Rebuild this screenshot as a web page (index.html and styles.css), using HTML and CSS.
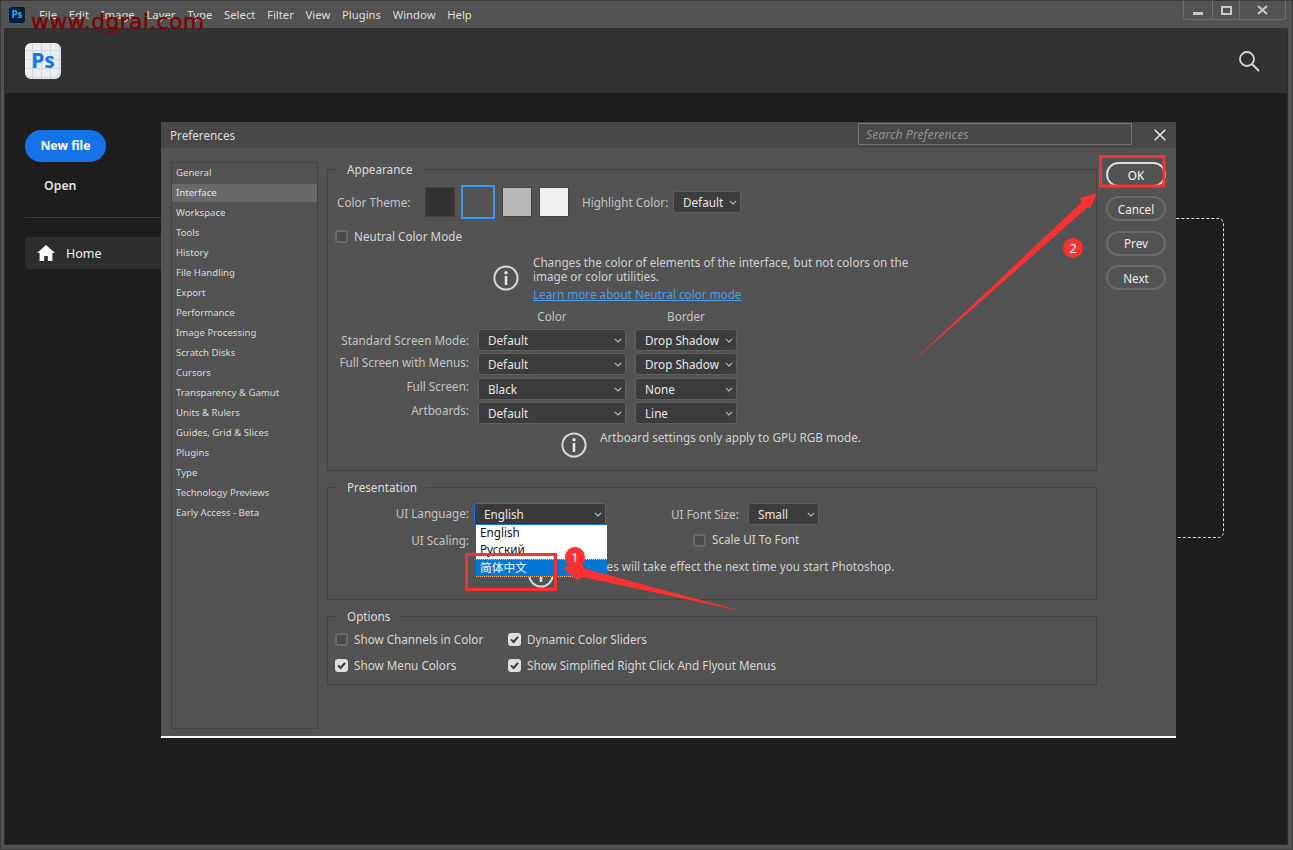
FILE: index.html
```html
<!DOCTYPE html>
<html lang="en">
<head>
<meta charset="utf-8">
<title>Photoshop Preferences</title>
<link rel="stylesheet" href="styles.css">
</head>
<body>
<svg class="defs" width="0" height="0" aria-hidden="true">
  <symbol id="chev" viewBox="0 0 8 5"><path d="M.8.8 4 4 7.2.8" fill="none" stroke="#bdbdbd" stroke-width="1.1"/></symbol>
  <symbol id="info" viewBox="0 0 26 26"><circle cx="13" cy="13" r="11.6" fill="none" stroke="#d6d6d6" stroke-width="2"/><circle cx="13" cy="7.8" r="1.7" fill="#e4e4e4"/><path d="M13 11v9" stroke="#e4e4e4" stroke-width="2.6"/></symbol>
  <symbol id="tick" viewBox="0 0 13 13"><path d="M3 6.4 5.6 9 10 3.8" fill="none" stroke="#3a3a3a" stroke-width="2"/></symbol>
</svg>
<div class="app">
  <header class="menubar">
    <div class="app-icon">Ps</div>
    <nav class="menu">
      <span>File</span><span>Edit</span><span>Image</span><span>Layer</span><span>Type</span><span>Select</span><span>Filter</span><span>View</span><span>Plugins</span><span>Window</span><span>Help</span>
    </nav>
    <div class="winctl">
      <div class="winbtn w-min"><svg width="10" height="3"><rect width="10" height="3" fill="#c8c8c8"/></svg></div>
      <div class="winbtn w-max"><svg width="11" height="9"><rect x="1" y="1" width="9" height="7" fill="none" stroke="#c8c8c8" stroke-width="2"/></svg></div>
      <div class="winbtn w-close"><svg width="11" height="10"><path d="M1 1l9 8M10 1l-9 8" stroke="#c8c8c8" stroke-width="2"/></svg></div>
    </div>
  </header>
  <div class="frame">
    <div class="homebar">
      <div class="logo">Ps</div>
      <svg class="search-ic" width="24" height="24" viewBox="0 0 24 24"><circle cx="10" cy="10" r="7" fill="none" stroke="#d4d4d4" stroke-width="1.8"/><path d="M15 15l7 7" stroke="#d4d4d4" stroke-width="2"/></svg>
    </div>
    <div class="home">
      <aside class="side">
        <div class="newfile">New file</div>
        <div class="open">Open</div>
        <div class="sep"></div>
        <div class="homeitem">
          <svg width="18" height="16" viewBox="0 0 18 16"><path d="M9 0 0 8h2.6v8h4.6v-5h3.6v5h4.6V8H18z" fill="#fff"/></svg>
          <span>Home</span>
        </div>
      </aside>
      <main class="drop-wrap"><div class="dropzone"></div></main>
    </div>
  </div>

  <section class="dialog">
    <div class="dlg-title">
      <span class="dlg-name">Preferences</span>
      <div class="dlg-search">Search Preferences</div>
      <svg class="dlg-close" width="12" height="12" viewBox="0 0 12 12"><path d="M.7.7l10.6 10.6M11.3.7.7 11.3" stroke="#e6e6e6" stroke-width="1.6"/></svg>
    </div>
    <div class="dlg-body">
      <ul class="cats">
        <li>General</li><li class="active">Interface</li><li>Workspace</li><li>Tools</li><li>History</li><li>File Handling</li><li>Export</li><li>Performance</li><li>Image Processing</li><li>Scratch Disks</li><li>Cursors</li><li>Transparency &amp; Gamut</li><li>Units &amp; Rulers</li><li>Guides, Grid &amp; Slices</li><li>Plugins</li><li>Type</li><li>Technology Previews</li><li>Early Access - Beta</li>
      </ul>
      <div class="panels">
        <div class="group g-app">
          <div class="legend">Appearance</div>
          <div class="theme-row">
            <span class="lbl theme-lbl">Color Theme:</span>
            <span class="swatch s1"></span>
            <span class="swatch s2"></span>
            <span class="swatch s3"></span>
            <span class="swatch s4"></span>
            <span class="lbl hl-lbl">Highlight Color:</span>
            <div class="dd dd-hl"><span>Default</span><svg class="chev"><use href="#chev"/></svg></div>
          </div>
          <label class="check neutral"><span class="box"></span><span>Neutral Color Mode</span></label>
          <div class="info info-a">
            <svg class="info-ic"><use href="#info"/></svg>
            <div>
              <p>Changes the color of elements of the interface, but not colors on the<br>image or color utilities.</p>
              <a class="link">Learn more about Neutral color mode</a>
            </div>
          </div>
          <div class="modes">
            <span></span><span class="head">Color</span><span class="head">Border</span>
            <span class="lbl m-lbl">Standard Screen Mode:</span>
            <div class="dd"><span>Default</span><svg class="chev"><use href="#chev"/></svg></div>
            <div class="dd"><span>Drop Shadow</span><svg class="chev"><use href="#chev"/></svg></div>
            <span class="lbl m-lbl up1">Full Screen with Menus:</span>
            <div class="dd"><span>Default</span><svg class="chev"><use href="#chev"/></svg></div>
            <div class="dd"><span>Drop Shadow</span><svg class="chev"><use href="#chev"/></svg></div>
            <span class="lbl m-lbl up3">Full Screen:</span>
            <div class="dd"><span>Black</span><svg class="chev"><use href="#chev"/></svg></div>
            <div class="dd"><span>None</span><svg class="chev"><use href="#chev"/></svg></div>
            <span class="lbl m-lbl up3">Artboards:</span>
            <div class="dd"><span>Default</span><svg class="chev"><use href="#chev"/></svg></div>
            <div class="dd"><span>Line</span><svg class="chev"><use href="#chev"/></svg></div>
          </div>
          <div class="info info-b">
            <svg class="info-ic"><use href="#info"/></svg>
            <p>Artboard settings only apply to GPU RGB mode.</p>
          </div>
        </div>

        <div class="group g-pres">
          <div class="legend">Presentation</div>
          <div class="pres-row r1">
            <span class="lbl p-lbl">UI Language:</span>
            <div class="lang">
              <div class="dd dd-open"><span>English</span><svg class="chev"><use href="#chev"/></svg></div>
              <ul class="popup">
                <li>English</li>
                <li>Русский</li>
                <li class="sel">简体中文</li>
              </ul>
            </div>
            <span class="lbl fs-lbl">UI Font Size:</span>
            <div class="dd dd-fs"><span>Small</span><svg class="chev"><use href="#chev"/></svg></div>
          </div>
          <div class="pres-row r2">
            <span class="lbl p-lbl">UI Scaling:</span>
            <label class="check scale"><span class="box"></span><span>Scale UI To Font</span></label>
          </div>
          <div class="info info-c">
            <svg class="info-ic"><use href="#info"/></svg>
            <p>Changes will take effect the next time you start Photoshop.</p>
          </div>
        </div>

        <div class="group g-opt">
          <div class="legend">Options</div>
          <div class="opt-grid">
            <label class="check"><span class="box"></span><span>Show Channels in Color</span></label>
            <label class="check"><span class="box on"><svg><use href="#tick"/></svg></span><span>Dynamic Color Sliders</span></label>
            <label class="check"><span class="box on"><svg><use href="#tick"/></svg></span><span>Show Menu Colors</span></label>
            <label class="check"><span class="box on"><svg><use href="#tick"/></svg></span><span>Show Simplified Right Click And Flyout Menus</span></label>
          </div>
        </div>
      </div>
      <div class="btns">
        <button class="btn primary">OK</button>
        <button class="btn">Cancel</button>
        <button class="btn">Prev</button>
        <button class="btn">Next</button>
      </div>
    </div>
  </section>

  <div class="watermark">www.dgrai.com</div>

  <svg class="marks" width="1293" height="850" viewBox="0 0 1293 850" aria-hidden="true">
    <rect x="466.5" y="554.5" width="89" height="35" fill="none" stroke="#fc3131" stroke-width="3"/>
    <rect x="1100.5" y="156.5" width="63.5" height="29.5" fill="none" stroke="#fc3131" stroke-width="3"/>
    <polygon points="745,612 586,569 579,560 563,568 577,580 583,577" fill="#fc3131"/>
    <polygon points="910,364 1082,202 1080,198 1097,193 1090,209 1088,207" fill="#fc3131"/>
    <circle cx="575" cy="557" r="10" fill="#fc3131"/>
    <circle cx="1073" cy="248" r="10" fill="#fc3131"/>
  </svg>
  <span class="badge b1">1</span>
  <span class="badge b2">2</span>
</div>
</body>
</html>
```
FILE: styles.css
```css
* { box-sizing: border-box; }
html, body { margin: 0; padding: 0; }
body {
  width: 1293px; height: 850px; overflow: hidden; background: #1e1e1e;
  font-family: "Noto Sans", "Noto Sans CJK SC", sans-serif; font-size: 11.7px; color: #d2d2d2;
}
p, ul { margin: 0; padding: 0; list-style: none; }
.defs { position: absolute; }
.app { position: relative; width: 1293px; height: 850px; display: flex; flex-direction: column; background: #535353; border: 1px solid #3a3a3a; }

.menubar { height: 27px; flex: none; display: flex; align-items: center; padding-left: 8px; }
.app-icon { width: 16px; height: 16px; border-radius: 3px; background: #001e36; color: #31a8ff; font-size: 10px; font-weight: 700; line-height: 15px; text-align: center; }
.menu { display: flex; gap: 11.7px; margin-left: 14px; color: #dcdcdc; font-size: 11.3px; }
.winctl { margin-left: auto; margin-right: 6px; align-self: flex-start; margin-top: -1px; height: 20px; width: 103px; display: flex; border: 1px solid #6e6e6e; border-top: 0; border-radius: 0 0 3px 3px; }
.winbtn { display: flex; align-items: center; justify-content: center; border-left: 1px solid #6e6e6e; padding-top: 1px; }
.w-min { width: 28px; border-left: 0; padding-top: 8px; }
.w-max { width: 27px; }
.w-close { flex: 1; }

.frame { flex: 1; margin: 0 4px 4px 3px; border: 1px solid #2c2c2c; display: flex; flex-direction: column; background: #1e1e1e; min-height: 0; }
.homebar { height: 64px; flex: none; background: #323232; display: flex; align-items: center; justify-content: space-between; padding: 0 26px 0 20px; }
.logo { width: 36px; height: 36px; border-radius: 6px; color: #1473e6; font-size: 21px; font-weight: 700; line-height: 35px; text-align: center;
  background-color: #ededed;
  background-image: linear-gradient(#c7d6e8 1px, transparent 1px), linear-gradient(90deg, #c7d6e8 1px, transparent 1px);
  background-size: 9px 9px; background-position: 0 7px, 7px 0; }
.search-ic { display: block; }

.home { flex: 1; display: flex; min-height: 0; }
.side { width: 230px; flex: none; padding: 37px 0 0 20px; }
.newfile { width: 81px; height: 32px; border-radius: 16px; background: #1473e6; color: #fff; font-size: 12.3px; font-weight: 700; line-height: 31px; text-align: center; }
.open { margin: 15px 0 0 19px; font-size: 12.3px; line-height: 18px; font-weight: 600; color: #e0e0e0; }
.sep { height: 1px; background: #3a3a3a; margin-top: 22px; }
.homeitem { margin-top: 19px; height: 32px; background: #2e2e2e; border-radius: 4px; display: flex; align-items: center; gap: 11px; padding-left: 12px; color: #efefef; font-size: 12.5px; }
.drop-wrap { flex: 1; padding: 125px 63px 0 0; }
.dropzone { height: 320px; border: 1px dashed #e4e4e4; border-radius: 6px; }

.dialog { position: absolute; left: 160px; top: 121px; width: 1015px; height: 616px; background: #535353; border-bottom: 2px solid #fff; }
.dlg-title { height: 26px; background: #484848; display: flex; align-items: center; padding-left: 9px; }
.dlg-name { margin-right: auto; color: #dcdcdc; }
.dlg-search { width: 274px; height: 22px; margin-top: -2px; border: 1px solid #767676; padding-left: 7px; line-height: 21px; font-size: 12.3px; font-style: italic; color: #929292; }
.dlg-close { margin: 0 10px 0 22px; }
.dlg-body { display: flex; padding: 14px 0 0 10px; }

.cats { width: 147px; height: 567px; border: 1px solid #444; padding-top: 0; font-size: 9.6px; color: #dadada; flex: none; }
.cats li { height: 20px; line-height: 19px; padding-left: 4px; }
.cats .active { background: #696969; height: 18px; line-height: 18px; margin: 1px 0; color: #e4e4e4; }

.panels { width: 770px; margin-left: 9px; padding-top: 7px; flex: none; }
.group { border: 1px solid #444; margin-bottom: 16px; }
.g-app { height: 302px; }
.g-pres { height: 113px; }
.g-opt { height: 69px; }
.legend { display: table; height: 16px; line-height: 15px; margin: -8px 0 0 10px; padding: 0 9px; background: #535353; color: #dcdcdc; }
.lbl { color: #c4c4c4; }

.theme-row { display: flex; align-items: center; height: 34px; margin-top: 7px; padding-left: 9px; }
.theme-lbl { width: 88px; }
.swatch { width: 30px; height: 30px; border: 1px solid #444; }
.s1 { background: #323232; }
.s2 { width: 34px; height: 34px; margin-left: 6px; border: 2px solid #3d97ef; background: #535353; }
.s3 { margin-left: 7px; background: #b8b8b8; }
.s4 { margin-left: 7px; background: #f0f0f0; }
.hl-lbl { margin-left: 13px; width: 91px; }

.dd { height: 22px; display: flex; align-items: center; justify-content: space-between; background: #3c3c3c; border: 1px solid #5f5f5f; border-radius: 3px; padding: 0 3px 0 9px; color: #e6e6e6; white-space: nowrap; }
.chev { width: 8px; height: 5px; flex: none; margin-top: 1px; }
.dd-hl { width: 68px; }

.check { display: flex; align-items: center; gap: 6px; height: 13px; color: #d6d6d6; white-space: nowrap; }
.check > span:last-child { margin-top: -2px; }
.box { width: 13px; height: 13px; flex: none; border: 2px solid #6b6b6b; border-radius: 3px; background: #4a4a4a; }
.box.on { background: #dedede; border: 0; }
.box svg { width: 13px; height: 13px; display: block; }
.neutral { margin: 11px 0 0 7px; }

.info { display: flex; color: #d0d0d0; }
.info p, .info a { line-height: 14px; }
.info-ic { width: 26px; height: 26px; flex: none; }
.info-a { margin-top: 12px; padding-left: 165px; gap: 14px; }
.info-a .info-ic { margin-top: 10px; }
.link { display: block; margin-top: 4px; color: #4b9fea; text-decoration: underline; }

.modes { display: grid; grid-template-columns: 141px 148px 102px; column-gap: 9px; grid-template-rows: 17.6px; grid-auto-rows: 22px; row-gap: 2.4px; margin-top: 8px; }
.head { text-align: center; line-height: 14px; color: #c4c4c4; }
.m-lbl { text-align: right; line-height: 22px; white-space: nowrap; }
.up1 { margin-top: -2px; }
.up3 { margin-top: -3px; }
.info-b { margin-top: 6px; padding-left: 233px; gap: 13px; }
.info-b .info-ic { margin-top: 2px; }

.pres-row { display: flex; align-items: center; }
.p-lbl { width: 141px; text-align: right; }
.r1 { height: 23px; margin-top: 6px; }
.r1 .p-lbl { margin-top: -2px; }
.r2 { height: 20px; margin-top: 5px; }
.lang { position: relative; width: 132px; margin-left: 5px; }
.dd-open { background: #3a3a3a; border: 1px solid #1473e6; }
.popup { position: absolute; z-index: 3; left: 2px; top: 22px; width: 131px; height: 52px; background: #fff; color: #111; }
.popup li { height: 17px; line-height: 15px; padding-left: 4px; }
.popup .sel { height: 18px; background: #0078d7; color: #fff; border-top: 1px dotted #f5b26a; border-bottom: 1px dotted #f5b26a; line-height: 15px; }
.fs-lbl { margin-left: 65px; width: 77px; }
.dd-fs { width: 71px; margin-top: 1px; }
.scale { margin-left: 224px; }
.info-c { margin-top: 9px; padding-left: 200px; gap: 17px; }
.info-c .info-ic { margin-top: 3px; }

.opt-grid { display: grid; grid-template-columns: 173px 1fr; row-gap: 13px; padding-left: 7px; margin-top: 8px; }

.btns { display: flex; flex-direction: column; gap: 9.4px; margin-left: 9px; width: 60px; }
.btn { height: 25px; border: 2px solid #6c6c6c; border-radius: 13px; background: transparent; color: #ececec; font: inherit; padding: 0; }
.btn.primary { border-color: #dcdcdc; color: #fff; }

.watermark { position: absolute; left: 30px; top: 8px; font-family: "DejaVu Sans", sans-serif; font-size: 22px; line-height: 26px; letter-spacing: .3px; -webkit-text-stroke: .4px #7c0404; color: #7c0404; white-space: nowrap; }
.marks { position: absolute; left: -1px; top: -1px; z-index: 5; }
.badge { position: absolute; z-index: 6; width: 20px; text-align: center; color: #fff; font-size: 13px; line-height: 20px; }
.b1 { left: 564px; top: 546px; }
.b2 { left: 1062px; top: 237px; }
```
